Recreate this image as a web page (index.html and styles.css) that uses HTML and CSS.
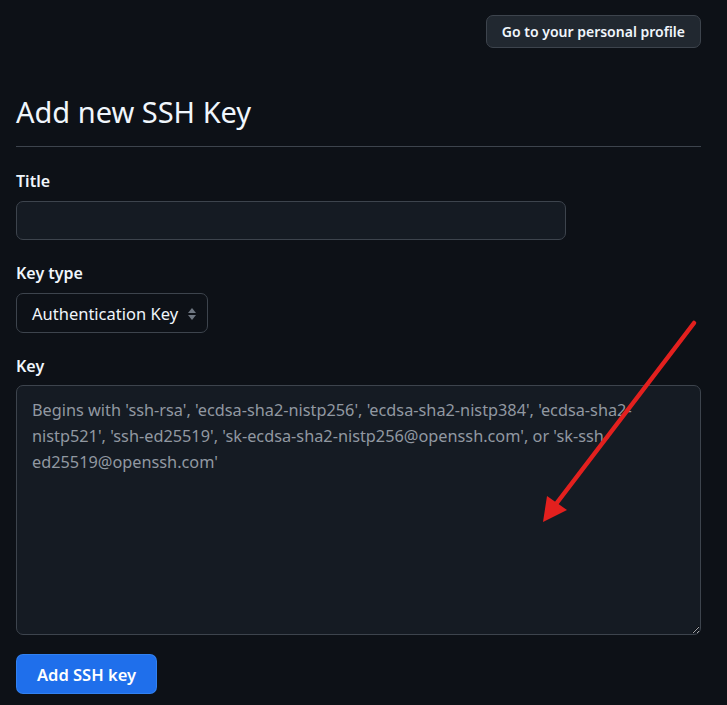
FILE: index.html
```html
<!DOCTYPE html>
<html>
<head>
<meta charset="utf-8">
<link rel="stylesheet" href="styles.css">
</head>
<body>
<div class="page">
  <div class="topbar">
    <button class="btn">Go to your personal profile</button>
  </div>
  <h1 class="subhead">Add new SSH Key</h1>
  <form class="form">
    <label class="label label-first">Title</label>
    <input class="input title-input" type="text">
    <label class="label">Key type</label>
    <div class="select">
      <span>Authentication Key</span>
      <svg class="caret" width="10" height="14" viewBox="0 0 10 14"><path d="M5 1 L9 6 L1 6 Z" fill="#6e7681"/><path d="M5 13 L9 8 L1 8 Z" fill="#6e7681"/></svg>
    </div>
    <label class="label label-key">Key</label>
    <textarea class="textarea" placeholder="Begins with 'ssh-rsa', 'ecdsa-sha2-nistp256', 'ecdsa-sha2-nistp384', 'ecdsa-sha2-nistp521', 'ssh-ed25519', 'sk-ecdsa-sha2-nistp256@openssh.com', or 'sk-ssh-ed25519@openssh.com'"></textarea>
    <div class="actions">
      <button class="btn-primary" type="button">Add SSH key</button>
    </div>
  </form>
</div>
<svg class="arrow" width="727" height="705" viewBox="0 0 727 705">
  <line x1="694" y1="323" x2="556" y2="504" stroke="#e3201e" stroke-width="4.5" stroke-linecap="round"/>
  <polygon points="543,522 547,496 567,510" fill="#e3201e"/>
</svg>
</body>
</html>
```
FILE: styles.css
```css
html, body {
  margin: 0;
  padding: 0;
  background: #0d1117;
}
body {
  font-family: "Noto Sans", "Liberation Sans", sans-serif;
  color: #f0f6fc;
  position: relative;
  width: 727px;
  height: 705px;
  overflow: hidden;
}
.page {
  width: 685px;
  margin-left: 16px;
  padding-top: 15px;
}
.topbar {
  display: flex;
  justify-content: flex-end;
}
.btn {
  height: 33px;
  padding: 0 15px;
  background: #212830;
  border: 1px solid #3d444d;
  border-radius: 7px;
  color: #f0f6fc;
  font-family: inherit;
  font-size: 14px;
  font-weight: 600;
}
.subhead {
  margin: 44px 0 0;
  padding-bottom: 14px;
  font-size: 29px;
  font-weight: 400;
  line-height: 40px;
  border-bottom: 1px solid #3d444d;
}
.form {
  display: flex;
  flex-direction: column;
  align-items: flex-start;
}
.label {
  font-size: 16px;
  font-weight: 600;
  line-height: 22px;
  margin-top: 22px;
  margin-bottom: 9px;
}
.label-first {
  margin-top: 23px;
}
.label-key {
  margin-bottom: 8px;
}
.input {
  box-sizing: border-box;
  width: 550px;
  height: 39px;
  background: #151b23;
  border: 1px solid #3d444d;
  border-radius: 7px;
}
.select {
  box-sizing: border-box;
  height: 40px;
  display: flex;
  align-items: center;
  gap: 9px;
  padding: 0 10px 0 15px;
  border: 1px solid #3d444d;
  border-radius: 7px;
  background: #0d1117;
  font-size: 16.5px;
  color: #f0f6fc;
}
.caret { margin-top: 1px; }
.textarea {
  box-sizing: border-box;
  width: 685px;
  height: 250px;
  background: #151b23;
  border: 1px solid #3d444d;
  border-radius: 7px;
  padding: 11px 15px;
  font-family: inherit;
  font-size: 16.3px;
  line-height: 26px;
  color: #f0f6fc;
  resize: vertical;
  margin: 0;
}
.textarea::placeholder {
  color: #9198a1;
}
.actions {
  margin-top: 19px;
}
.btn-primary {
  height: 40px;
  padding: 0 20px;
  background: #1f6feb;
  border: 1px solid rgba(68,147,248,0.5);
  border-radius: 7px;
  color: #ffffff;
  font-family: inherit;
  font-size: 16.5px;
  font-weight: 600;
}
.arrow {
  position: absolute;
  left: 0;
  top: 0;
  pointer-events: none;
}
```
